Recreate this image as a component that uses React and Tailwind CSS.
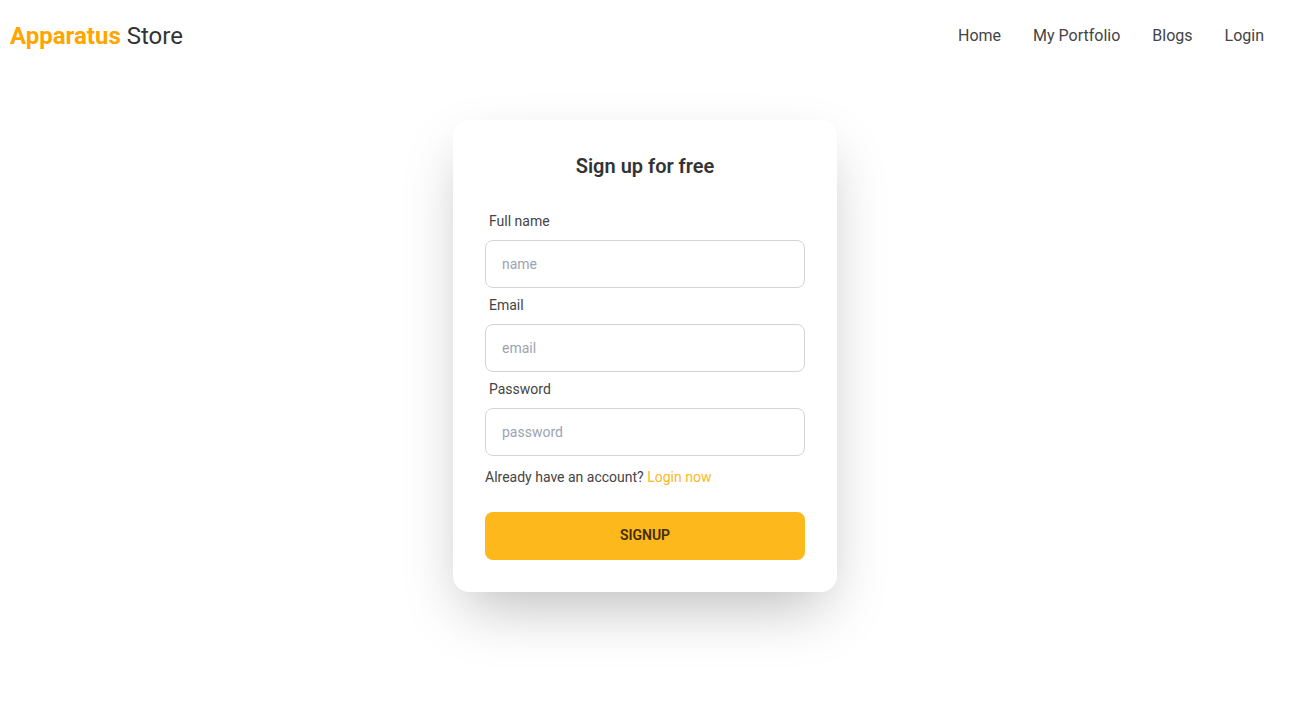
const links = ["Home", "My Portfolio", "Blogs", "Login"];

const fields = [
  { id: "name", label: "Full name", type: "text" },
  { id: "email", label: "Email", type: "email" },
  { id: "password", label: "Password", type: "password" },
];

function Navbar() {
  return (
    <header className="flex items-center justify-between px-[10px] py-3">
      <a href="#" className="text-2xl">
        <span className="font-bold text-[#ffa500]">Apparatus</span> Store
      </a>
      <nav className="flex">
        {links.map((link) => (
          <a key={link} href="#" className="px-4 py-3 text-base text-[#444444]">
            {link}
          </a>
        ))}
      </nav>
    </header>
  );
}

export default function App() {
  return (
    <div className="min-h-screen bg-white font-['Roboto',sans-serif] text-[#333333]">
      <Navbar />
      <main className="flex justify-center px-4 py-12">
        <form
          className="flex w-96 flex-col rounded-2xl bg-white p-8 shadow-[0_25px_60px_-12px_rgba(0,0,0,0.27)]"
          onSubmit={(e) => e.preventDefault()}
        >
          <h2 className="text-center text-xl font-semibold">Sign up for free</h2>
          <div className="mt-6">
            {fields.map((field) => (
              <div key={field.id}>
                <label
                  htmlFor={field.id}
                  className="block px-1 pt-2 pb-[10px] text-sm leading-[18px] text-[#444444]"
                >
                  {field.label}
                </label>
                <input
                  id={field.id}
                  type={field.type}
                  placeholder={field.id}
                  className="block h-12 w-full rounded-lg border border-[#d4d4d5] bg-white px-4 text-sm placeholder:text-[#9ca3af]"
                />
              </div>
            ))}
          </div>
          <p className="mt-3 mb-[26px] text-sm leading-[18px] text-[#444444]">
            Already have an account?{" "}
            <a href="#" className="text-[#fdb81c]">
              Login now
            </a>
          </p>
          <button
            type="submit"
            className="h-12 rounded-lg bg-[#fdb81c] pb-0.5 text-sm font-semibold text-[#402d07] uppercase"
          >
            Signup
          </button>
        </form>
      </main>
    </div>
  );
}
